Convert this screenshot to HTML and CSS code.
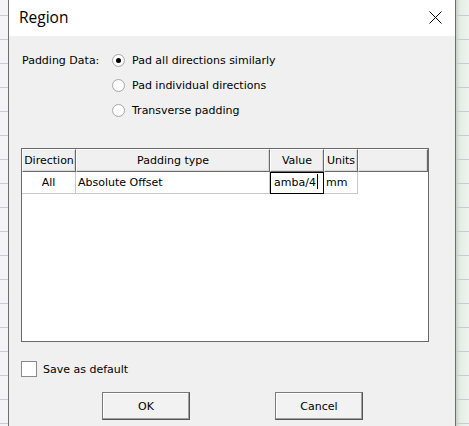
FILE: index.html
```html
<!DOCTYPE html>
<html>
<head>
<meta charset="utf-8">
<link rel="stylesheet" href="styles.css">
</head>
<body>
<div class="bg-left"></div>
<div class="dialog">
  <div class="titlebar">
    <span class="title">Region</span>
    <svg class="close" width="13" height="13" viewBox="0 0 13 13"><path d="M0.5 0.5 L12.5 12.5 M12.5 0.5 L0.5 12.5" stroke="#000" stroke-width="1" fill="none"/></svg>
  </div>
  <div class="content">
    <div class="padding-group">
      <div class="label">Padding Data:</div>
      <div class="radios">
        <div class="radio-row"><span class="radio checked"></span><span>Pad all directions similarly</span></div>
        <div class="radio-row"><span class="radio"></span><span>Pad individual directions</span></div>
        <div class="radio-row"><span class="radio"></span><span>Transverse padding</span></div>
      </div>
    </div>
    <div class="grid">
      <div class="hrow">
        <div class="hcell c1">Direction</div>
        <div class="hcell c2">Padding type</div>
        <div class="hcell c3">Value</div>
        <div class="hcell c4">Units</div>
        <div class="hcell c5"></div>
      </div>
      <div class="drow">
        <div class="dcell c1 center">All</div>
        <div class="dcell c2">Absolute Offset</div>
        <div class="dcell c3 edit">amba/4<span class="caret"></span></div>
        <div class="dcell c4">mm</div>
      </div>
    </div>
    <div class="check-row"><span class="checkbox"></span><span>Save as default</span></div>
    <div class="buttons">
      <button class="btn">OK</button>
      <button class="btn">Cancel</button>
    </div>
  </div>
</div>
<div class="bg-right"></div>
</body>
</html>
```
FILE: styles.css
```css
html, body {
  margin: 0;
  padding: 0;
}
body {
  width: 469px;
  height: 426px;
  overflow: hidden;
  display: flex;
  font-family: "DejaVu Sans", Verdana, sans-serif;
  font-size: 11px;
  color: #000;
}
.bg-left {
  width: 8px;
  flex: none;
  background-color: #f4f4f6;
  background-image: repeating-linear-gradient(to bottom, transparent 0, transparent 15px, #c9c9dd 15px, #c9c9dd 16px, transparent 16px, transparent 24px);
}
.bg-right {
  flex: 1;
  background-color: #e6efe6;
  background-image: repeating-linear-gradient(to bottom, transparent 0, transparent 15px, #c4cbd6 15px, #c4cbd6 16px, transparent 16px, transparent 24px), linear-gradient(to right, #c8d0c8, #e4ede4 4px, #eef4ee);
}
.dialog {
  width: 448px;
  flex: none;
  box-sizing: border-box;
  border-left: 1px solid #6e6e6e;
  border-right: 1px solid #6e6e6e;
  background: #f0f0f0;
  display: flex;
  flex-direction: column;
}
.titlebar {
  height: 36px;
  background: #fff;
  display: flex;
  align-items: center;
  justify-content: space-between;
  padding: 0 13px 0 10px;
}
.title {
  font-family: "Open Sans", "Noto Sans", sans-serif;
  font-size: 15.5px;
  position: relative;
  top: -1px;
}
.close {
  display: block;
  position: relative;
  top: -1px;
}
.content {
  padding: 12px 0 0 12px;
}
.padding-group {
  display: flex;
}
.label {
  width: 90px;
  padding-left: 1px;
  height: 25px;
  line-height: 25px;
}
.radios {
  display: flex;
  flex-direction: column;
}
.radio-row {
  height: 25px;
  display: flex;
  align-items: center;
  gap: 7px;
}
.radio {
  width: 11px;
  height: 11px;
  border: 1px solid #a8a8a8;
  border-radius: 50%;
  background: radial-gradient(circle at 50% 45%, #fff 55%, #ececec 100%);
  box-sizing: content-box;
  position: relative;
}
.radio.checked::after {
  content: "";
  position: absolute;
  left: 3px;
  top: 3px;
  width: 5px;
  height: 5px;
  border-radius: 50%;
  background: #000;
}
.grid {
  margin-top: 25px;
  width: 408px;
  height: 194px;
  box-sizing: border-box;
  border: 1px solid #6a6a6a;
  background: #fff;
}
.hrow, .drow {
  display: flex;
}
.hcell {
  height: 23px;
  box-sizing: border-box;
  background: #f0f0f0;
  border-top: 1px solid #fff;
  border-left: 1px solid #fff;
  border-right: 1px solid #6a6a6a;
  border-bottom: 1px solid #6a6a6a;
  box-shadow: inset -1px -1px 0 #d8d8d8;
  text-align: center;
  line-height: 21px;
  white-space: nowrap;
  overflow: hidden;
}
.c1 { width: 54px; }
.c2 { width: 194px; }
.c3 { width: 54px; }
.c4 { width: 34px; }
.c5 { width: 70px; }
.dcell {
  height: 22px;
  box-sizing: border-box;
  border-right: 1px solid #c8c8c8;
  border-bottom: 1px solid #c8c8c8;
  line-height: 21px;
  padding-left: 2px;
  white-space: nowrap;
  overflow: hidden;
}
.dcell.center {
  text-align: center;
  padding-left: 0;
}
.dcell.edit {
  border: 1px solid #000;
  padding-left: 3px;
  line-height: 20px;
}
.caret {
  display: inline-block;
  width: 1px;
  height: 15px;
  background: #000;
  vertical-align: -3px;
  margin-left: 1px;
}
.check-row {
  margin-top: 19px;
  display: flex;
  align-items: center;
  gap: 6px;
  height: 16px;
}
.checkbox {
  width: 14px;
  height: 14px;
  border: 1px solid #8a8a8a;
  background: #fff;
}
.buttons {
  margin-top: 15px;
  margin-left: 81px;
  display: flex;
  gap: 85px;
}
.btn {
  width: 88px;
  height: 28px;
  box-sizing: border-box;
  font-family: "DejaVu Sans", Verdana, sans-serif;
  font-size: 11px;
  color: #000;
  background: #f2f2f2;
  border: 1px solid #7a7a7a;
  border-right-color: #555;
  border-bottom-color: #555;
  box-shadow: inset -1px -1px 0 #a0a0a0, inset 1px 1px 0 #fff;
  padding: 0;
}
```
